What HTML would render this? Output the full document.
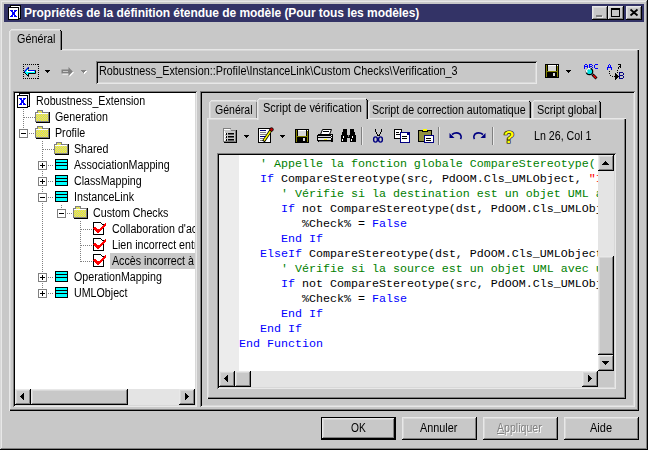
<!DOCTYPE html>
<html><head><meta charset="utf-8"><style>
*{margin:0;padding:0;box-sizing:border-box}
html,body{width:648px;height:450px;overflow:hidden;background:#c8c8c8}
body{position:relative;font-family:"Liberation Sans",sans-serif;font-size:11px;color:#000}
.a{position:absolute}
.t{position:absolute;white-space:pre;line-height:13px;letter-spacing:-0.3px}
.raised{background:#c8c8c8;box-shadow:inset -1px -1px #000,inset 1px 1px #e8e8e8,inset -2px -2px #808080,inset 2px 2px #d8d8d8}
.sunken{box-shadow:inset 1px 1px #808080,inset -1px -1px #e8e8e8,inset 2px 2px #000,inset -2px -2px #d8d8d8}
.dith{background-color:#e4e4e4}
.code{position:absolute;font-family:"Liberation Mono",monospace;font-size:11.67px;line-height:15px;white-space:pre;color:#000}
.k{color:#0000ff}.c{color:#008000}.s{color:#ff0000}
svg{position:absolute;left:0;top:0}
</style></head><body>
<div class="a " style="left:0px;top:0px;width:648px;height:450px;box-shadow:inset -1px -1px #000,inset 1px 1px #d8d8d8,inset -2px -2px #808080,inset 2px 2px #e8e8e8"></div>
<div class="a " style="left:4px;top:4px;width:640px;height:18px;background:#333366"></div>
<div class="t" style="left:24px;top:7px;color:#fff;font-weight:bold;font-size:12px;letter-spacing:-0.05px">Propriétés de la définition étendue de modèle (Pour tous les modèles)</div>
<div class="a raised" style="left:592px;top:6px;width:16px;height:14px;"></div>
<div class="a raised" style="left:608px;top:6px;width:16px;height:14px;"></div>
<div class="a raised" style="left:626px;top:6px;width:16px;height:14px;"></div>
<div class="a " style="left:9px;top:49px;width:630px;height:362px;box-shadow:inset 1px 1px #e8e8e8,inset -1px -1px #000,inset -2px -2px #808080,inset 2px 2px #d8d8d8"></div>
<div class="a " style="left:10px;top:30px;width:51px;height:21px;background:#c8c8c8"></div>
<div class="a " style="left:11px;top:29px;width:49px;height:1px;background:#e8e8e8"></div>
<div class="a " style="left:11px;top:30px;width:49px;height:1px;background:#d8d8d8"></div>
<div class="a " style="left:10px;top:30px;width:1px;height:1px;background:#e8e8e8"></div>
<div class="a " style="left:9px;top:31px;width:1px;height:20px;background:#e8e8e8"></div>
<div class="a " style="left:10px;top:31px;width:1px;height:20px;background:#d8d8d8"></div>
<div class="a " style="left:61px;top:31px;width:1px;height:19px;background:#000"></div>
<div class="a " style="left:60px;top:31px;width:1px;height:19px;background:#808080"></div>
<div class="a " style="left:60px;top:30px;width:1px;height:1px;background:#000"></div>
<div class="t" style="left:17px;top:33px;font-size:12px;letter-spacing:0;transform:scaleX(0.9);transform-origin:0 0;">Général</div>
<div class="a sunken" style="left:96px;top:61px;width:441px;height:23px;"></div>
<div class="t" style="left:99px;top:65px;font-size:12px;letter-spacing:0;transform:scaleX(0.902);transform-origin:0 0;">Robustness_Extension::Profile\InstanceLink\Custom Checks\Verification_3</div>
<div class="a sunken" style="left:13px;top:91px;width:184px;height:316px;background:#fff"></div>
<div class="a " style="left:110px;top:253px;width:85px;height:16px;background:#c8c8c8"></div>
<div class="a" style="left:15px;top:93px;width:180px;height:296px;overflow:hidden">
<div class="t" style="left:21px;top:2px;font-size:12px;letter-spacing:0;transform:scaleX(0.89);transform-origin:0 0;">Robustness_Extension</div>
<div class="t" style="left:40px;top:18px;font-size:12px;letter-spacing:0;transform:scaleX(0.89);transform-origin:0 0;">Generation</div>
<div class="t" style="left:40px;top:34px;font-size:12px;letter-spacing:0;transform:scaleX(0.89);transform-origin:0 0;">Profile</div>
<div class="t" style="left:59px;top:50px;font-size:12px;letter-spacing:0;transform:scaleX(0.89);transform-origin:0 0;">Shared</div>
<div class="t" style="left:59px;top:66px;font-size:12px;letter-spacing:0;transform:scaleX(0.89);transform-origin:0 0;">AssociationMapping</div>
<div class="t" style="left:59px;top:82px;font-size:12px;letter-spacing:0;transform:scaleX(0.89);transform-origin:0 0;">ClassMapping</div>
<div class="t" style="left:59px;top:98px;font-size:12px;letter-spacing:0;transform:scaleX(0.89);transform-origin:0 0;">InstanceLink</div>
<div class="t" style="left:78px;top:114px;font-size:12px;letter-spacing:0;transform:scaleX(0.89);transform-origin:0 0;">Custom Checks</div>
<div class="t" style="left:97px;top:130px;font-size:12px;letter-spacing:0;transform:scaleX(0.89);transform-origin:0 0;">Collaboration d'acteur</div>
<div class="t" style="left:97px;top:146px;font-size:12px;letter-spacing:0;transform:scaleX(0.89);transform-origin:0 0;">Lien incorrect entre</div>
<div class="t" style="left:97px;top:162px;font-size:12px;letter-spacing:0;transform:scaleX(0.89);transform-origin:0 0;">Accès incorrect à</div>
<div class="t" style="left:59px;top:178px;font-size:12px;letter-spacing:0;transform:scaleX(0.89);transform-origin:0 0;">OperationMapping</div>
<div class="t" style="left:59px;top:194px;font-size:12px;letter-spacing:0;transform:scaleX(0.89);transform-origin:0 0;">UMLObject</div>
</div>
<div class="a dith" style="left:15px;top:389px;width:180px;height:16px;"></div>
<div class="a raised" style="left:15px;top:389px;width:16px;height:16px;"></div>
<div class="a raised" style="left:31px;top:389px;width:97px;height:16px;"></div>
<div class="a raised" style="left:179px;top:389px;width:16px;height:16px;"></div>
<div class="a sunken" style="left:200px;top:91px;width:435px;height:316px;"></div>
<div class="a " style="left:207px;top:118px;width:419px;height:281px;box-shadow:inset 1px 1px #e8e8e8,inset -1px -1px #000,inset -2px -2px #808080,inset 2px 2px #d8d8d8"></div>
<div class="a " style="left:210px;top:101px;width:47px;height:17px;background:#c8c8c8"></div>
<div class="a " style="left:211px;top:100px;width:45px;height:1px;background:#e8e8e8"></div>
<div class="a " style="left:211px;top:101px;width:45px;height:1px;background:#d8d8d8"></div>
<div class="a " style="left:210px;top:101px;width:1px;height:1px;background:#e8e8e8"></div>
<div class="a " style="left:209px;top:102px;width:1px;height:16px;background:#e8e8e8"></div>
<div class="a " style="left:210px;top:102px;width:1px;height:16px;background:#d8d8d8"></div>
<div class="a " style="left:256px;top:102px;width:1px;height:16px;background:#808080"></div>
<div class="t" style="left:215px;top:104px;font-size:12px;letter-spacing:0;transform:scaleX(0.878);transform-origin:0 0;">Général</div>
<div class="a " style="left:369px;top:101px;width:161px;height:17px;background:#c8c8c8"></div>
<div class="a " style="left:370px;top:100px;width:159px;height:1px;background:#e8e8e8"></div>
<div class="a " style="left:370px;top:101px;width:159px;height:1px;background:#d8d8d8"></div>
<div class="a " style="left:369px;top:101px;width:1px;height:1px;background:#e8e8e8"></div>
<div class="a " style="left:368px;top:102px;width:1px;height:16px;background:#e8e8e8"></div>
<div class="a " style="left:369px;top:102px;width:1px;height:16px;background:#d8d8d8"></div>
<div class="a " style="left:530px;top:102px;width:1px;height:16px;background:#000"></div>
<div class="a " style="left:529px;top:102px;width:1px;height:16px;background:#808080"></div>
<div class="a " style="left:529px;top:101px;width:1px;height:1px;background:#000"></div>
<div class="t" style="left:372px;top:104px;font-size:12px;letter-spacing:0;transform:scaleX(0.889);transform-origin:0 0;">Script de correction automatique</div>
<div class="a " style="left:533px;top:101px;width:67px;height:17px;background:#c8c8c8"></div>
<div class="a " style="left:534px;top:100px;width:65px;height:1px;background:#e8e8e8"></div>
<div class="a " style="left:534px;top:101px;width:65px;height:1px;background:#d8d8d8"></div>
<div class="a " style="left:533px;top:101px;width:1px;height:1px;background:#e8e8e8"></div>
<div class="a " style="left:532px;top:102px;width:1px;height:16px;background:#e8e8e8"></div>
<div class="a " style="left:533px;top:102px;width:1px;height:16px;background:#d8d8d8"></div>
<div class="a " style="left:600px;top:102px;width:1px;height:16px;background:#000"></div>
<div class="a " style="left:599px;top:102px;width:1px;height:16px;background:#808080"></div>
<div class="a " style="left:599px;top:101px;width:1px;height:1px;background:#000"></div>
<div class="t" style="left:537px;top:104px;font-size:12px;letter-spacing:0;transform:scaleX(0.906);transform-origin:0 0;">Script global</div>
<div class="a " style="left:258px;top:99px;width:109px;height:21px;background:#c8c8c8"></div>
<div class="a " style="left:259px;top:98px;width:107px;height:1px;background:#e8e8e8"></div>
<div class="a " style="left:259px;top:99px;width:107px;height:1px;background:#d8d8d8"></div>
<div class="a " style="left:258px;top:99px;width:1px;height:1px;background:#e8e8e8"></div>
<div class="a " style="left:257px;top:100px;width:1px;height:20px;background:#e8e8e8"></div>
<div class="a " style="left:258px;top:100px;width:1px;height:20px;background:#d8d8d8"></div>
<div class="a " style="left:367px;top:100px;width:1px;height:19px;background:#000"></div>
<div class="a " style="left:366px;top:100px;width:1px;height:19px;background:#808080"></div>
<div class="a " style="left:366px;top:99px;width:1px;height:1px;background:#000"></div>
<div class="t" style="left:263px;top:102px;font-size:12px;letter-spacing:0;transform:scaleX(0.915);transform-origin:0 0;">Script de vérification</div>
<div class="t" style="left:534px;top:130px;font-size:12px;letter-spacing:0;transform:scaleX(0.889);transform-origin:0 0;">Ln 26, Col 1</div>
<div class="a sunken" style="left:217px;top:153px;width:399px;height:236px;background:#fff"></div>
<div class="a " style="left:219px;top:155px;width:20px;height:216px;background:#ececec"></div>
<div class="a" style="left:219px;top:155px;width:379px;height:216px;overflow:hidden">
<div class="code" style="left:20px;top:2px"><span class="c">   ' Appelle la fonction globale CompareStereotype(</span>
   <span class="k">If</span> CompareStereotype(src, PdOOM.Cls_UMLObject, <span class="s">"Interface"</span>
<span class="c">      ' Vérifie si la destination est un objet UML avec</span>
      <span class="k">If</span> not CompareStereotype(dst, PdOOM.Cls_UMLObject
         %Check% = <span class="k">False</span>
      <span class="k">End If</span>
   <span class="k">ElseIf</span> CompareStereotype(dst, PdOOM.Cls_UMLObject,
<span class="c">      ' Vérifie si la source est un objet UML avec un</span>
      <span class="k">If</span> not CompareStereotype(src, PdOOM.Cls_UMLObject
         %Check% = <span class="k">False</span>
      <span class="k">End If</span>
   <span class="k">End If</span>
<span class="k">End Function</span></div>
</div>
<div class="a dith" style="left:598px;top:155px;width:16px;height:216px;"></div>
<div class="a raised" style="left:598px;top:155px;width:16px;height:16px;"></div>
<div class="a raised" style="left:598px;top:256px;width:16px;height:99px;"></div>
<div class="a raised" style="left:598px;top:355px;width:16px;height:16px;"></div>
<div class="a dith" style="left:219px;top:371px;width:379px;height:16px;"></div>
<div class="a raised" style="left:219px;top:371px;width:16px;height:16px;"></div>
<div class="a raised" style="left:235px;top:371px;width:16px;height:16px;"></div>
<div class="a raised" style="left:582px;top:371px;width:16px;height:16px;"></div>
<div class="a " style="left:598px;top:371px;width:16px;height:16px;background:#c8c8c8"></div>
<div class="a " style="left:321px;top:417px;width:75px;height:23px;background:#000"></div>
<div class="a raised" style="left:322px;top:418px;width:73px;height:21px;"></div>
<div class="t" style="left:351px;top:422px;font-size:12px;letter-spacing:0;transform:scaleX(0.85);transform-origin:0 0;">OK</div>
<div class="a raised" style="left:402px;top:417px;width:75px;height:23px;"></div>
<div class="t" style="left:420px;top:422px;font-size:12px;letter-spacing:0;transform:scaleX(0.902);transform-origin:0 0;">Annuler</div>
<div class="a raised" style="left:483px;top:417px;width:75px;height:23px;"></div>
<div class="t" style="left:497px;top:422px;font-size:12px;letter-spacing:0;transform:scaleX(0.882);transform-origin:0 0;color:#808080;text-shadow:1px 1px #fff"><u>A</u>ppliquer</div>
<div class="a raised" style="left:564px;top:417px;width:75px;height:23px;"></div>
<div class="t" style="left:590px;top:422px;font-size:12px;letter-spacing:0;transform:scaleX(0.917);transform-origin:0 0;">Aide</div>
<svg width="648" height="450" shape-rendering="crispEdges"><defs><pattern id="chk" width="2" height="2" patternUnits="userSpaceOnUse"><rect width="2" height="2" fill="#ffff00"/><rect width="1" height="1" fill="#c0c0c0"/><rect x="1" y="1" width="1" height="1" fill="#c0c0c0"/></pattern></defs><rect x="23" y="109" width="1" height="1" fill="#808080"/><rect x="23" y="111" width="1" height="1" fill="#808080"/><rect x="23" y="113" width="1" height="1" fill="#808080"/><rect x="23" y="115" width="1" height="1" fill="#808080"/><rect x="23" y="117" width="1" height="1" fill="#808080"/><rect x="23" y="119" width="1" height="1" fill="#808080"/><rect x="23" y="121" width="1" height="1" fill="#808080"/><rect x="23" y="123" width="1" height="1" fill="#808080"/><rect x="23" y="125" width="1" height="1" fill="#808080"/><rect x="23" y="127" width="1" height="1" fill="#808080"/><rect x="23" y="129" width="1" height="1" fill="#808080"/><rect x="23" y="131" width="1" height="1" fill="#808080"/><rect x="23" y="133" width="1" height="1" fill="#808080"/><rect x="42" y="141" width="1" height="1" fill="#808080"/><rect x="42" y="143" width="1" height="1" fill="#808080"/><rect x="42" y="145" width="1" height="1" fill="#808080"/><rect x="42" y="147" width="1" height="1" fill="#808080"/><rect x="42" y="149" width="1" height="1" fill="#808080"/><rect x="42" y="151" width="1" height="1" fill="#808080"/><rect x="42" y="153" width="1" height="1" fill="#808080"/><rect x="42" y="155" width="1" height="1" fill="#808080"/><rect x="42" y="157" width="1" height="1" fill="#808080"/><rect x="42" y="159" width="1" height="1" fill="#808080"/><rect x="42" y="161" width="1" height="1" fill="#808080"/><rect x="42" y="163" width="1" height="1" fill="#808080"/><rect x="42" y="165" width="1" height="1" fill="#808080"/><rect x="42" y="167" width="1" height="1" fill="#808080"/><rect x="42" y="169" width="1" height="1" fill="#808080"/><rect x="42" y="171" width="1" height="1" fill="#808080"/><rect x="42" y="173" width="1" height="1" fill="#808080"/><rect x="42" y="175" width="1" height="1" fill="#808080"/><rect x="42" y="177" width="1" height="1" fill="#808080"/><rect x="42" y="179" width="1" height="1" fill="#808080"/><rect x="42" y="181" width="1" height="1" fill="#808080"/><rect x="42" y="183" width="1" height="1" fill="#808080"/><rect x="42" y="185" width="1" height="1" fill="#808080"/><rect x="42" y="187" width="1" height="1" fill="#808080"/><rect x="42" y="189" width="1" height="1" fill="#808080"/><rect x="42" y="191" width="1" height="1" fill="#808080"/><rect x="42" y="193" width="1" height="1" fill="#808080"/><rect x="42" y="195" width="1" height="1" fill="#808080"/><rect x="42" y="197" width="1" height="1" fill="#808080"/><rect x="42" y="199" width="1" height="1" fill="#808080"/><rect x="42" y="201" width="1" height="1" fill="#808080"/><rect x="42" y="203" width="1" height="1" fill="#808080"/><rect x="42" y="205" width="1" height="1" fill="#808080"/><rect x="42" y="207" width="1" height="1" fill="#808080"/><rect x="42" y="209" width="1" height="1" fill="#808080"/><rect x="42" y="211" width="1" height="1" fill="#808080"/><rect x="42" y="213" width="1" height="1" fill="#808080"/><rect x="42" y="215" width="1" height="1" fill="#808080"/><rect x="42" y="217" width="1" height="1" fill="#808080"/><rect x="42" y="219" width="1" height="1" fill="#808080"/><rect x="42" y="221" width="1" height="1" fill="#808080"/><rect x="42" y="223" width="1" height="1" fill="#808080"/><rect x="42" y="225" width="1" height="1" fill="#808080"/><rect x="42" y="227" width="1" height="1" fill="#808080"/><rect x="42" y="229" width="1" height="1" fill="#808080"/><rect x="42" y="231" width="1" height="1" fill="#808080"/><rect x="42" y="233" width="1" height="1" fill="#808080"/><rect x="42" y="235" width="1" height="1" fill="#808080"/><rect x="42" y="237" width="1" height="1" fill="#808080"/><rect x="42" y="239" width="1" height="1" fill="#808080"/><rect x="42" y="241" width="1" height="1" fill="#808080"/><rect x="42" y="243" width="1" height="1" fill="#808080"/><rect x="42" y="245" width="1" height="1" fill="#808080"/><rect x="42" y="247" width="1" height="1" fill="#808080"/><rect x="42" y="249" width="1" height="1" fill="#808080"/><rect x="42" y="251" width="1" height="1" fill="#808080"/><rect x="42" y="253" width="1" height="1" fill="#808080"/><rect x="42" y="255" width="1" height="1" fill="#808080"/><rect x="42" y="257" width="1" height="1" fill="#808080"/><rect x="42" y="259" width="1" height="1" fill="#808080"/><rect x="42" y="261" width="1" height="1" fill="#808080"/><rect x="42" y="263" width="1" height="1" fill="#808080"/><rect x="42" y="265" width="1" height="1" fill="#808080"/><rect x="42" y="267" width="1" height="1" fill="#808080"/><rect x="42" y="269" width="1" height="1" fill="#808080"/><rect x="42" y="271" width="1" height="1" fill="#808080"/><rect x="42" y="273" width="1" height="1" fill="#808080"/><rect x="42" y="275" width="1" height="1" fill="#808080"/><rect x="42" y="277" width="1" height="1" fill="#808080"/><rect x="42" y="279" width="1" height="1" fill="#808080"/><rect x="42" y="281" width="1" height="1" fill="#808080"/><rect x="42" y="283" width="1" height="1" fill="#808080"/><rect x="42" y="285" width="1" height="1" fill="#808080"/><rect x="42" y="287" width="1" height="1" fill="#808080"/><rect x="42" y="289" width="1" height="1" fill="#808080"/><rect x="42" y="291" width="1" height="1" fill="#808080"/><rect x="42" y="293" width="1" height="1" fill="#808080"/><rect x="61" y="205" width="1" height="1" fill="#808080"/><rect x="61" y="207" width="1" height="1" fill="#808080"/><rect x="61" y="209" width="1" height="1" fill="#808080"/><rect x="61" y="211" width="1" height="1" fill="#808080"/><rect x="61" y="213" width="1" height="1" fill="#808080"/><rect x="80" y="221" width="1" height="1" fill="#808080"/><rect x="80" y="223" width="1" height="1" fill="#808080"/><rect x="80" y="225" width="1" height="1" fill="#808080"/><rect x="80" y="227" width="1" height="1" fill="#808080"/><rect x="80" y="229" width="1" height="1" fill="#808080"/><rect x="80" y="231" width="1" height="1" fill="#808080"/><rect x="80" y="233" width="1" height="1" fill="#808080"/><rect x="80" y="235" width="1" height="1" fill="#808080"/><rect x="80" y="237" width="1" height="1" fill="#808080"/><rect x="80" y="239" width="1" height="1" fill="#808080"/><rect x="80" y="241" width="1" height="1" fill="#808080"/><rect x="80" y="243" width="1" height="1" fill="#808080"/><rect x="80" y="245" width="1" height="1" fill="#808080"/><rect x="80" y="247" width="1" height="1" fill="#808080"/><rect x="80" y="249" width="1" height="1" fill="#808080"/><rect x="80" y="251" width="1" height="1" fill="#808080"/><rect x="80" y="253" width="1" height="1" fill="#808080"/><rect x="80" y="255" width="1" height="1" fill="#808080"/><rect x="80" y="257" width="1" height="1" fill="#808080"/><rect x="80" y="259" width="1" height="1" fill="#808080"/><rect x="80" y="261" width="1" height="1" fill="#808080"/><rect x="24" y="117" width="1" height="1" fill="#808080"/><rect x="26" y="117" width="1" height="1" fill="#808080"/><rect x="28" y="117" width="1" height="1" fill="#808080"/><rect x="30" y="117" width="1" height="1" fill="#808080"/><rect x="32" y="117" width="1" height="1" fill="#808080"/><rect x="34" y="117" width="1" height="1" fill="#808080"/><rect x="29" y="133" width="1" height="1" fill="#808080"/><rect x="31" y="133" width="1" height="1" fill="#808080"/><rect x="33" y="133" width="1" height="1" fill="#808080"/><rect x="43" y="149" width="1" height="1" fill="#808080"/><rect x="45" y="149" width="1" height="1" fill="#808080"/><rect x="47" y="149" width="1" height="1" fill="#808080"/><rect x="49" y="149" width="1" height="1" fill="#808080"/><rect x="51" y="149" width="1" height="1" fill="#808080"/><rect x="53" y="149" width="1" height="1" fill="#808080"/><rect x="48" y="165" width="1" height="1" fill="#808080"/><rect x="50" y="165" width="1" height="1" fill="#808080"/><rect x="52" y="165" width="1" height="1" fill="#808080"/><rect x="48" y="181" width="1" height="1" fill="#808080"/><rect x="50" y="181" width="1" height="1" fill="#808080"/><rect x="52" y="181" width="1" height="1" fill="#808080"/><rect x="48" y="197" width="1" height="1" fill="#808080"/><rect x="50" y="197" width="1" height="1" fill="#808080"/><rect x="52" y="197" width="1" height="1" fill="#808080"/><rect x="48" y="277" width="1" height="1" fill="#808080"/><rect x="50" y="277" width="1" height="1" fill="#808080"/><rect x="52" y="277" width="1" height="1" fill="#808080"/><rect x="48" y="293" width="1" height="1" fill="#808080"/><rect x="50" y="293" width="1" height="1" fill="#808080"/><rect x="52" y="293" width="1" height="1" fill="#808080"/><rect x="67" y="213" width="1" height="1" fill="#808080"/><rect x="69" y="213" width="1" height="1" fill="#808080"/><rect x="71" y="213" width="1" height="1" fill="#808080"/><rect x="81" y="229" width="1" height="1" fill="#808080"/><rect x="83" y="229" width="1" height="1" fill="#808080"/><rect x="85" y="229" width="1" height="1" fill="#808080"/><rect x="87" y="229" width="1" height="1" fill="#808080"/><rect x="89" y="229" width="1" height="1" fill="#808080"/><rect x="91" y="229" width="1" height="1" fill="#808080"/><rect x="81" y="245" width="1" height="1" fill="#808080"/><rect x="83" y="245" width="1" height="1" fill="#808080"/><rect x="85" y="245" width="1" height="1" fill="#808080"/><rect x="87" y="245" width="1" height="1" fill="#808080"/><rect x="89" y="245" width="1" height="1" fill="#808080"/><rect x="91" y="245" width="1" height="1" fill="#808080"/><rect x="81" y="261" width="1" height="1" fill="#808080"/><rect x="83" y="261" width="1" height="1" fill="#808080"/><rect x="85" y="261" width="1" height="1" fill="#808080"/><rect x="87" y="261" width="1" height="1" fill="#808080"/><rect x="89" y="261" width="1" height="1" fill="#808080"/><rect x="91" y="261" width="1" height="1" fill="#808080"/><rect x="19" y="129" width="9" height="9" fill="#808080"/><rect x="20" y="130" width="7" height="7" fill="#fff"/><rect x="21" y="133" width="5" height="1" fill="#000"/><rect x="38" y="161" width="9" height="9" fill="#808080"/><rect x="39" y="162" width="7" height="7" fill="#fff"/><rect x="40" y="165" width="5" height="1" fill="#000"/><rect x="42" y="163" width="1" height="5" fill="#000"/><rect x="38" y="177" width="9" height="9" fill="#808080"/><rect x="39" y="178" width="7" height="7" fill="#fff"/><rect x="40" y="181" width="5" height="1" fill="#000"/><rect x="42" y="179" width="1" height="5" fill="#000"/><rect x="38" y="193" width="9" height="9" fill="#808080"/><rect x="39" y="194" width="7" height="7" fill="#fff"/><rect x="40" y="197" width="5" height="1" fill="#000"/><rect x="38" y="273" width="9" height="9" fill="#808080"/><rect x="39" y="274" width="7" height="7" fill="#fff"/><rect x="40" y="277" width="5" height="1" fill="#000"/><rect x="42" y="275" width="1" height="5" fill="#000"/><rect x="38" y="289" width="9" height="9" fill="#808080"/><rect x="39" y="290" width="7" height="7" fill="#fff"/><rect x="40" y="293" width="5" height="1" fill="#000"/><rect x="42" y="291" width="1" height="5" fill="#000"/><rect x="57" y="209" width="9" height="9" fill="#808080"/><rect x="58" y="210" width="7" height="7" fill="#fff"/><rect x="59" y="213" width="5" height="1" fill="#000"/><rect x="19" y="93" width="11" height="14" fill="#000"/><rect x="20" y="94" width="9" height="12" fill="#e8e8e8"/><rect x="20" y="94" width="8" height="1" fill="#fff"/><rect x="17" y="95" width="11" height="13" fill="#000"/><rect x="18" y="96" width="9" height="11" fill="#fff"/><rect x="19" y="98" width="1" height="1" fill="#00f"/><rect x="20" y="98" width="1" height="1" fill="#00f"/><rect x="21" y="98" width="1" height="1" fill="#00f"/><rect x="23" y="98" width="1" height="1" fill="#00f"/><rect x="24" y="98" width="1" height="1" fill="#00f"/><rect x="25" y="98" width="1" height="1" fill="#00f"/><rect x="20" y="99" width="1" height="1" fill="#00f"/><rect x="21" y="99" width="1" height="1" fill="#00f"/><rect x="23" y="99" width="1" height="1" fill="#00f"/><rect x="24" y="99" width="1" height="1" fill="#00f"/><rect x="21" y="100" width="1" height="1" fill="#00f"/><rect x="22" y="100" width="1" height="1" fill="#00f"/><rect x="23" y="100" width="1" height="1" fill="#00f"/><rect x="21" y="101" width="1" height="1" fill="#00f"/><rect x="22" y="101" width="1" height="1" fill="#00f"/><rect x="23" y="101" width="1" height="1" fill="#00f"/><rect x="21" y="102" width="1" height="1" fill="#00f"/><rect x="22" y="102" width="1" height="1" fill="#00f"/><rect x="23" y="102" width="1" height="1" fill="#00f"/><rect x="20" y="103" width="1" height="1" fill="#00f"/><rect x="21" y="103" width="1" height="1" fill="#00f"/><rect x="23" y="103" width="1" height="1" fill="#00f"/><rect x="24" y="103" width="1" height="1" fill="#00f"/><rect x="19" y="104" width="1" height="1" fill="#00f"/><rect x="20" y="104" width="1" height="1" fill="#00f"/><rect x="21" y="104" width="1" height="1" fill="#00f"/><rect x="23" y="104" width="1" height="1" fill="#00f"/><rect x="24" y="104" width="1" height="1" fill="#00f"/><rect x="25" y="104" width="1" height="1" fill="#00f"/><rect x="36" y="112" width="14" height="11" fill="#000"/><rect x="35" y="112" width="14" height="10" fill="#808080"/><rect x="37" y="110" width="6" height="2" fill="#808080"/><rect x="36" y="113" width="12" height="8" fill="url(#chk)"/><rect x="38" y="111" width="4" height="2" fill="url(#chk)"/><rect x="36" y="113" width="12" height="1" fill="#fff"/><rect x="36" y="128" width="14" height="11" fill="#000"/><rect x="35" y="128" width="14" height="10" fill="#808080"/><rect x="37" y="126" width="6" height="2" fill="#808080"/><rect x="36" y="129" width="12" height="8" fill="url(#chk)"/><rect x="38" y="127" width="4" height="2" fill="url(#chk)"/><rect x="36" y="129" width="12" height="1" fill="#fff"/><rect x="55" y="144" width="14" height="11" fill="#000"/><rect x="54" y="144" width="14" height="10" fill="#808080"/><rect x="56" y="142" width="6" height="2" fill="#808080"/><rect x="55" y="145" width="12" height="8" fill="url(#chk)"/><rect x="57" y="143" width="4" height="2" fill="url(#chk)"/><rect x="55" y="145" width="12" height="1" fill="#fff"/><rect x="74" y="208" width="14" height="11" fill="#000"/><rect x="73" y="208" width="14" height="10" fill="#808080"/><rect x="75" y="206" width="6" height="2" fill="#808080"/><rect x="74" y="209" width="12" height="8" fill="url(#chk)"/><rect x="76" y="207" width="4" height="2" fill="url(#chk)"/><rect x="74" y="209" width="12" height="1" fill="#fff"/><rect x="55" y="159" width="13" height="11" fill="#000"/><rect x="56" y="160" width="11" height="2" fill="#00ffff"/><rect x="56" y="163" width="11" height="2" fill="#00ffff"/><rect x="56" y="166" width="11" height="3" fill="#00ffff"/><rect x="55" y="175" width="13" height="11" fill="#000"/><rect x="56" y="176" width="11" height="2" fill="#00ffff"/><rect x="56" y="179" width="11" height="2" fill="#00ffff"/><rect x="56" y="182" width="11" height="3" fill="#00ffff"/><rect x="55" y="191" width="13" height="11" fill="#000"/><rect x="56" y="192" width="11" height="2" fill="#00ffff"/><rect x="56" y="195" width="11" height="2" fill="#00ffff"/><rect x="56" y="198" width="11" height="3" fill="#00ffff"/><rect x="55" y="271" width="13" height="11" fill="#000"/><rect x="56" y="272" width="11" height="2" fill="#00ffff"/><rect x="56" y="275" width="11" height="2" fill="#00ffff"/><rect x="56" y="278" width="11" height="3" fill="#00ffff"/><rect x="55" y="287" width="13" height="11" fill="#000"/><rect x="56" y="288" width="11" height="2" fill="#00ffff"/><rect x="56" y="291" width="11" height="2" fill="#00ffff"/><rect x="56" y="294" width="11" height="3" fill="#00ffff"/><rect x="93" y="222" width="11" height="13" fill="#000"/><rect x="94" y="223" width="9" height="11" fill="#fff"/><rect x="100" y="222" width="4" height="3" fill="#fff"/><rect x="100" y="222" width="1" height="1" fill="#000"/><rect x="101" y="223" width="1" height="1" fill="#000"/><rect x="102" y="224" width="2" height="1" fill="#000"/><path d="M94 227.5L98 231.5L106 224" stroke="#f00" stroke-width="2.2" fill="none"/><rect x="93" y="238" width="11" height="13" fill="#000"/><rect x="94" y="239" width="9" height="11" fill="#fff"/><rect x="100" y="238" width="4" height="3" fill="#fff"/><rect x="100" y="238" width="1" height="1" fill="#000"/><rect x="101" y="239" width="1" height="1" fill="#000"/><rect x="102" y="240" width="2" height="1" fill="#000"/><path d="M94 243.5L98 247.5L106 240" stroke="#f00" stroke-width="2.2" fill="none"/><rect x="93" y="254" width="11" height="13" fill="#000"/><rect x="94" y="255" width="9" height="11" fill="#fff"/><rect x="100" y="254" width="4" height="3" fill="#fff"/><rect x="100" y="254" width="1" height="1" fill="#000"/><rect x="101" y="255" width="1" height="1" fill="#000"/><rect x="102" y="256" width="2" height="1" fill="#000"/><path d="M94 259.5L98 263.5L106 256" stroke="#f00" stroke-width="2.2" fill="none"/><rect x="10" y="5" width="11" height="14" fill="#000"/><rect x="11" y="6" width="9" height="12" fill="#e8e8e8"/><rect x="11" y="6" width="8" height="1" fill="#fff"/><rect x="8" y="7" width="11" height="13" fill="#000"/><rect x="9" y="8" width="9" height="11" fill="#fff"/><rect x="10" y="10" width="1" height="1" fill="#00f"/><rect x="11" y="10" width="1" height="1" fill="#00f"/><rect x="12" y="10" width="1" height="1" fill="#00f"/><rect x="14" y="10" width="1" height="1" fill="#00f"/><rect x="15" y="10" width="1" height="1" fill="#00f"/><rect x="16" y="10" width="1" height="1" fill="#00f"/><rect x="11" y="11" width="1" height="1" fill="#00f"/><rect x="12" y="11" width="1" height="1" fill="#00f"/><rect x="14" y="11" width="1" height="1" fill="#00f"/><rect x="15" y="11" width="1" height="1" fill="#00f"/><rect x="12" y="12" width="1" height="1" fill="#00f"/><rect x="13" y="12" width="1" height="1" fill="#00f"/><rect x="14" y="12" width="1" height="1" fill="#00f"/><rect x="12" y="13" width="1" height="1" fill="#00f"/><rect x="13" y="13" width="1" height="1" fill="#00f"/><rect x="14" y="13" width="1" height="1" fill="#00f"/><rect x="12" y="14" width="1" height="1" fill="#00f"/><rect x="13" y="14" width="1" height="1" fill="#00f"/><rect x="14" y="14" width="1" height="1" fill="#00f"/><rect x="11" y="15" width="1" height="1" fill="#00f"/><rect x="12" y="15" width="1" height="1" fill="#00f"/><rect x="14" y="15" width="1" height="1" fill="#00f"/><rect x="15" y="15" width="1" height="1" fill="#00f"/><rect x="10" y="16" width="1" height="1" fill="#00f"/><rect x="11" y="16" width="1" height="1" fill="#00f"/><rect x="12" y="16" width="1" height="1" fill="#00f"/><rect x="14" y="16" width="1" height="1" fill="#00f"/><rect x="15" y="16" width="1" height="1" fill="#00f"/><rect x="16" y="16" width="1" height="1" fill="#00f"/><rect x="20" y="396" width="1" height="1" fill="#000"/><rect x="21" y="395" width="1" height="3" fill="#000"/><rect x="22" y="394" width="1" height="5" fill="#000"/><rect x="23" y="393" width="1" height="7" fill="#000"/><rect x="188" y="396" width="1" height="1" fill="#000"/><rect x="187" y="395" width="1" height="3" fill="#000"/><rect x="186" y="394" width="1" height="5" fill="#000"/><rect x="185" y="393" width="1" height="7" fill="#000"/><rect x="605" y="161" width="1" height="1" fill="#000"/><rect x="604" y="162" width="3" height="1" fill="#000"/><rect x="603" y="163" width="5" height="1" fill="#000"/><rect x="602" y="164" width="7" height="1" fill="#000"/><rect x="605" y="364" width="1" height="1" fill="#000"/><rect x="604" y="363" width="3" height="1" fill="#000"/><rect x="603" y="362" width="5" height="1" fill="#000"/><rect x="602" y="361" width="7" height="1" fill="#000"/><rect x="224" y="378" width="1" height="1" fill="#000"/><rect x="225" y="377" width="1" height="3" fill="#000"/><rect x="226" y="376" width="1" height="5" fill="#000"/><rect x="227" y="375" width="1" height="7" fill="#000"/><rect x="591" y="378" width="1" height="1" fill="#000"/><rect x="590" y="377" width="1" height="3" fill="#000"/><rect x="589" y="376" width="1" height="5" fill="#000"/><rect x="588" y="375" width="1" height="7" fill="#000"/><rect x="23" y="64" width="1" height="1" fill="#000"/><rect x="23" y="78" width="1" height="1" fill="#000"/><rect x="25" y="64" width="1" height="1" fill="#000"/><rect x="25" y="78" width="1" height="1" fill="#000"/><rect x="27" y="64" width="1" height="1" fill="#000"/><rect x="27" y="78" width="1" height="1" fill="#000"/><rect x="29" y="64" width="1" height="1" fill="#000"/><rect x="29" y="78" width="1" height="1" fill="#000"/><rect x="31" y="64" width="1" height="1" fill="#000"/><rect x="31" y="78" width="1" height="1" fill="#000"/><rect x="33" y="64" width="1" height="1" fill="#000"/><rect x="33" y="78" width="1" height="1" fill="#000"/><rect x="35" y="64" width="1" height="1" fill="#000"/><rect x="35" y="78" width="1" height="1" fill="#000"/><rect x="37" y="64" width="1" height="1" fill="#000"/><rect x="37" y="78" width="1" height="1" fill="#000"/><rect x="23" y="64" width="1" height="1" fill="#000"/><rect x="38" y="64" width="1" height="1" fill="#000"/><rect x="23" y="66" width="1" height="1" fill="#000"/><rect x="38" y="66" width="1" height="1" fill="#000"/><rect x="23" y="68" width="1" height="1" fill="#000"/><rect x="38" y="68" width="1" height="1" fill="#000"/><rect x="23" y="70" width="1" height="1" fill="#000"/><rect x="38" y="70" width="1" height="1" fill="#000"/><rect x="23" y="72" width="1" height="1" fill="#000"/><rect x="38" y="72" width="1" height="1" fill="#000"/><rect x="23" y="74" width="1" height="1" fill="#000"/><rect x="38" y="74" width="1" height="1" fill="#000"/><rect x="23" y="76" width="1" height="1" fill="#000"/><rect x="38" y="76" width="1" height="1" fill="#000"/><rect x="23" y="78" width="1" height="1" fill="#000"/><rect x="38" y="78" width="1" height="1" fill="#000"/><g shape-rendering="auto"><polygon points="24,72 28.5,67.5 28.5,70.5 35.5,70.5 35.5,73.5 28.5,73.5 28.5,76.5" fill="#00ffff" stroke="#000" stroke-width="1" /></g><rect x="29" y="70" width="6" height="1" fill="#0000ff"/><rect x="27" y="71" width="7" height="1" fill="#fff"/><g shape-rendering="auto"><path d="M24.3 71.6L28.6 67.3" stroke="#0000ff" stroke-width="1.1"/><path d="M26.5 71.5L28.5 69.5" stroke="#fff" stroke-width="1"/></g><rect x="45" y="70" width="5" height="1" fill="#000"/><rect x="46" y="71" width="3" height="1" fill="#000"/><rect x="47" y="72" width="1" height="1" fill="#000"/><g shape-rendering="auto"><polygon points="74,72.5 69.5,68 69.5,70.5 62.5,70.5 62.5,74.5 69.5,74.5 69.5,77" fill="#fff" /><polygon points="73,71.5 68.5,67 68.5,69.5 61.5,69.5 61.5,73.5 68.5,73.5 68.5,76" fill="#808080" /></g><rect x="63" y="71" width="5" height="1" fill="#c8c8c8"/><rect x="82" y="71" width="5" height="1" fill="#fff"/><rect x="83" y="72" width="3" height="1" fill="#fff"/><rect x="84" y="73" width="1" height="1" fill="#fff"/><rect x="81" y="70" width="5" height="1" fill="#808080"/><rect x="82" y="71" width="3" height="1" fill="#808080"/><rect x="83" y="72" width="1" height="1" fill="#808080"/><rect x="545" y="64" width="14" height="14" fill="#000"/><rect x="546" y="65" width="1" height="12" fill="#808000"/><rect x="557" y="65" width="1" height="12" fill="#808000"/><rect x="546" y="71" width="12" height="1" fill="#808000"/><rect x="548" y="65" width="8" height="6" fill="#d8d8d8"/><rect x="548" y="65" width="8" height="1" fill="#fff"/><rect x="553" y="73" width="2" height="3" fill="#d8d8d8"/><rect x="557" y="65" width="1" height="1" fill="#fff"/><rect x="566" y="70" width="5" height="1" fill="#000"/><rect x="567" y="71" width="3" height="1" fill="#000"/><rect x="568" y="72" width="1" height="1" fill="#000"/><rect x="585" y="64" width="1" height="1" fill="#0000ff"/><rect x="586" y="64" width="1" height="1" fill="#0000ff"/><rect x="584" y="65" width="1" height="1" fill="#0000ff"/><rect x="587" y="65" width="1" height="1" fill="#0000ff"/><rect x="584" y="66" width="1" height="1" fill="#0000ff"/><rect x="585" y="66" width="1" height="1" fill="#0000ff"/><rect x="586" y="66" width="1" height="1" fill="#0000ff"/><rect x="587" y="66" width="1" height="1" fill="#0000ff"/><rect x="584" y="67" width="1" height="1" fill="#0000ff"/><rect x="587" y="67" width="1" height="1" fill="#0000ff"/><rect x="584" y="68" width="1" height="1" fill="#0000ff"/><rect x="587" y="68" width="1" height="1" fill="#0000ff"/><rect x="589" y="64" width="1" height="1" fill="#0000ff"/><rect x="590" y="64" width="1" height="1" fill="#0000ff"/><rect x="591" y="64" width="1" height="1" fill="#0000ff"/><rect x="589" y="65" width="1" height="1" fill="#0000ff"/><rect x="592" y="65" width="1" height="1" fill="#0000ff"/><rect x="589" y="66" width="1" height="1" fill="#0000ff"/><rect x="590" y="66" width="1" height="1" fill="#0000ff"/><rect x="591" y="66" width="1" height="1" fill="#0000ff"/><rect x="589" y="67" width="1" height="1" fill="#0000ff"/><rect x="592" y="67" width="1" height="1" fill="#0000ff"/><rect x="589" y="68" width="1" height="1" fill="#0000ff"/><rect x="590" y="68" width="1" height="1" fill="#0000ff"/><rect x="591" y="68" width="1" height="1" fill="#0000ff"/><rect x="595" y="64" width="1" height="1" fill="#0000ff"/><rect x="596" y="64" width="1" height="1" fill="#0000ff"/><rect x="597" y="64" width="1" height="1" fill="#0000ff"/><rect x="594" y="65" width="1" height="1" fill="#0000ff"/><rect x="594" y="66" width="1" height="1" fill="#0000ff"/><rect x="594" y="67" width="1" height="1" fill="#0000ff"/><rect x="595" y="68" width="1" height="1" fill="#0000ff"/><rect x="596" y="68" width="1" height="1" fill="#0000ff"/><rect x="597" y="68" width="1" height="1" fill="#0000ff"/><g shape-rendering="auto"><path d="M592.5 74.5L596.5 78.5" stroke="#000" stroke-width="2.8"/><path d="M593.3 75.3L596 78" stroke="#f00" stroke-width="1.3"/><circle cx="589.5" cy="71.5" r="3.2" fill="#00e0e0" stroke="#000" stroke-width="1.2"/><path d="M587.2 72.5A2.3 2.3 0 0 1 590.5 69.3" stroke="#fff" stroke-width="1.3" fill="none"/></g><rect x="609" y="64" width="1" height="1" fill="#0000ff"/><rect x="608" y="65" width="1" height="1" fill="#0000ff"/><rect x="610" y="65" width="1" height="1" fill="#0000ff"/><rect x="608" y="66" width="1" height="1" fill="#0000ff"/><rect x="610" y="66" width="1" height="1" fill="#0000ff"/><rect x="607" y="67" width="1" height="1" fill="#0000ff"/><rect x="608" y="67" width="1" height="1" fill="#0000ff"/><rect x="609" y="67" width="1" height="1" fill="#0000ff"/><rect x="610" y="67" width="1" height="1" fill="#0000ff"/><rect x="611" y="67" width="1" height="1" fill="#0000ff"/><rect x="607" y="68" width="1" height="1" fill="#0000ff"/><rect x="611" y="68" width="1" height="1" fill="#0000ff"/><rect x="607" y="69" width="1" height="1" fill="#0000ff"/><rect x="611" y="69" width="1" height="1" fill="#0000ff"/><rect x="619" y="72" width="1" height="1" fill="#000080"/><rect x="620" y="72" width="1" height="1" fill="#000080"/><rect x="621" y="72" width="1" height="1" fill="#000080"/><rect x="622" y="72" width="1" height="1" fill="#000080"/><rect x="619" y="73" width="1" height="1" fill="#000080"/><rect x="623" y="73" width="1" height="1" fill="#000080"/><rect x="619" y="74" width="1" height="1" fill="#000080"/><rect x="623" y="74" width="1" height="1" fill="#000080"/><rect x="619" y="75" width="1" height="1" fill="#000080"/><rect x="620" y="75" width="1" height="1" fill="#000080"/><rect x="621" y="75" width="1" height="1" fill="#000080"/><rect x="622" y="75" width="1" height="1" fill="#000080"/><rect x="619" y="76" width="1" height="1" fill="#000080"/><rect x="623" y="76" width="1" height="1" fill="#000080"/><rect x="619" y="77" width="1" height="1" fill="#000080"/><rect x="623" y="77" width="1" height="1" fill="#000080"/><rect x="619" y="78" width="1" height="1" fill="#000080"/><rect x="620" y="78" width="1" height="1" fill="#000080"/><rect x="621" y="78" width="1" height="1" fill="#000080"/><rect x="622" y="78" width="1" height="1" fill="#000080"/><rect x="609" y="71" width="1" height="1" fill="#000"/><rect x="609" y="73" width="1" height="1" fill="#000"/><rect x="610" y="75" width="1" height="1" fill="#000"/><rect x="612" y="76" width="1" height="1" fill="#000"/><rect x="614" y="76" width="1" height="1" fill="#000"/><rect x="617" y="72" width="1" height="1" fill="#000"/><rect x="617" y="70" width="1" height="1" fill="#000"/><rect x="618" y="68" width="1" height="1" fill="#000"/><rect x="615" y="73" width="1" height="1" fill="#000"/><rect x="615" y="74" width="1" height="1" fill="#000"/><rect x="616" y="74" width="1" height="1" fill="#000"/><rect x="615" y="75" width="1" height="1" fill="#000"/><rect x="616" y="75" width="1" height="1" fill="#000"/><rect x="617" y="75" width="1" height="1" fill="#000"/><rect x="615" y="76" width="1" height="1" fill="#000"/><rect x="616" y="76" width="1" height="1" fill="#000"/><rect x="617" y="76" width="1" height="1" fill="#000"/><rect x="618" y="76" width="1" height="1" fill="#000"/><rect x="615" y="77" width="1" height="1" fill="#000"/><rect x="616" y="77" width="1" height="1" fill="#000"/><rect x="617" y="77" width="1" height="1" fill="#000"/><rect x="615" y="78" width="1" height="1" fill="#000"/><rect x="616" y="78" width="1" height="1" fill="#000"/><rect x="615" y="79" width="1" height="1" fill="#000"/><rect x="618" y="64" width="1" height="1" fill="#000"/><rect x="619" y="64" width="1" height="1" fill="#000"/><rect x="620" y="64" width="1" height="1" fill="#000"/><rect x="620" y="65" width="1" height="1" fill="#000"/><rect x="619" y="66" width="1" height="1" fill="#000"/><rect x="620" y="66" width="1" height="1" fill="#000"/><rect x="618" y="67" width="1" height="1" fill="#000"/><rect x="620" y="67" width="1" height="1" fill="#000"/><rect x="223" y="128" width="8" height="1" fill="#808080"/><rect x="223" y="128" width="1" height="14" fill="#808080"/><rect x="231" y="130" width="6" height="1" fill="#808080"/><rect x="224" y="129" width="6" height="1" fill="#fff"/><rect x="224" y="131" width="1" height="10" fill="#fff"/><rect x="236" y="130" width="1" height="13" fill="#000"/><rect x="224" y="142" width="13" height="1" fill="#000"/><rect x="235" y="131" width="1" height="11" fill="#808080"/><rect x="224" y="141" width="12" height="1" fill="#808080"/><rect x="226" y="133" width="1" height="2" fill="#000"/><rect x="225" y="133" width="1" height="1" fill="#fff"/><rect x="228" y="133" width="6" height="1" fill="#000"/><rect x="228" y="134" width="6" height="1" fill="#606060"/><rect x="226" y="136" width="1" height="2" fill="#000"/><rect x="225" y="136" width="1" height="1" fill="#fff"/><rect x="228" y="136" width="6" height="1" fill="#000"/><rect x="228" y="137" width="6" height="1" fill="#606060"/><rect x="226" y="139" width="1" height="2" fill="#000"/><rect x="225" y="139" width="1" height="1" fill="#fff"/><rect x="228" y="139" width="6" height="1" fill="#000"/><rect x="228" y="140" width="6" height="1" fill="#606060"/><rect x="244" y="135" width="5" height="1" fill="#000"/><rect x="245" y="136" width="3" height="1" fill="#000"/><rect x="246" y="137" width="1" height="1" fill="#000"/><rect x="258" y="128" width="13" height="15" fill="#000"/><rect x="259" y="129" width="11" height="13" fill="#fff"/><rect x="260" y="130" width="6" height="1" fill="#000080"/><rect x="260" y="132" width="6" height="1" fill="#808080"/><rect x="260" y="134" width="6" height="1" fill="#808080"/><rect x="260" y="136" width="6" height="1" fill="#000080"/><rect x="260" y="138" width="6" height="1" fill="#808080"/><rect x="260" y="140" width="6" height="1" fill="#808080"/><g shape-rendering="auto"><path d="M263.5 141.5L271 130" stroke="#000" stroke-width="3.2"/><path d="M264 140.5L270.5 131" stroke="#ff0" stroke-width="1.4"/><circle cx="271.5" cy="129.5" r="1.8" fill="#c00000" stroke="#000" stroke-width="0.8"/></g><rect x="280" y="135" width="5" height="1" fill="#000"/><rect x="281" y="136" width="3" height="1" fill="#000"/><rect x="282" y="137" width="1" height="1" fill="#000"/><rect x="295" y="129" width="14" height="14" fill="#000"/><rect x="296" y="130" width="1" height="12" fill="#808000"/><rect x="307" y="130" width="1" height="12" fill="#808000"/><rect x="296" y="136" width="12" height="1" fill="#808000"/><rect x="298" y="130" width="8" height="6" fill="#d8d8d8"/><rect x="298" y="130" width="8" height="1" fill="#fff"/><rect x="303" y="138" width="2" height="3" fill="#d8d8d8"/><rect x="307" y="130" width="1" height="1" fill="#fff"/><g shape-rendering="auto"><polygon points="322.5,129.5 331.5,129.5 329.5,134.5 320.5,134.5" fill="#fff" stroke="#000" stroke-width="1" /></g><rect x="323" y="131" width="6" height="1" fill="#000"/><rect x="318" y="134" width="15" height="8" fill="#000"/><rect x="317" y="135" width="1" height="6" fill="#000"/><rect x="318" y="136" width="13" height="1" fill="#d8d8d8"/><rect x="318" y="138" width="13" height="2" fill="#e8e8e8"/><rect x="324" y="139" width="3" height="1" fill="#ffff00"/><rect x="319" y="141" width="12" height="1" fill="#808080"/><rect x="331" y="135" width="1" height="1" fill="#fff"/><rect x="331" y="137" width="1" height="1" fill="#fff"/><rect x="343" y="129" width="4" height="3" fill="#000"/><rect x="350" y="129" width="4" height="3" fill="#000"/><rect x="342" y="132" width="5" height="3" fill="#000"/><rect x="350" y="132" width="5" height="3" fill="#000"/><rect x="341" y="135" width="15" height="3" fill="#000"/><rect x="341" y="138" width="6" height="4" fill="#000"/><rect x="350" y="138" width="6" height="4" fill="#000"/><rect x="343" y="136" width="1" height="2" fill="#fff"/><rect x="352" y="136" width="1" height="2" fill="#fff"/><rect x="342" y="139" width="1" height="2" fill="#fff"/><rect x="351" y="139" width="1" height="2" fill="#fff"/><rect x="348" y="135" width="1" height="2" fill="#808080"/><rect x="361" y="127" width="1" height="18" fill="#808080"/><rect x="362" y="127" width="1" height="18" fill="#e8e8e8"/><rect x="438" y="127" width="1" height="18" fill="#808080"/><rect x="439" y="127" width="1" height="18" fill="#e8e8e8"/><rect x="492" y="127" width="1" height="18" fill="#808080"/><rect x="493" y="127" width="1" height="18" fill="#e8e8e8"/><rect x="375" y="129" width="1" height="3" fill="#000"/><rect x="376" y="132" width="1" height="2" fill="#000"/><rect x="377" y="134" width="1" height="2" fill="#000"/><rect x="381" y="129" width="1" height="3" fill="#000"/><rect x="380" y="132" width="1" height="2" fill="#000"/><rect x="379" y="134" width="1" height="2" fill="#000"/><rect x="378" y="135" width="1" height="1" fill="#000"/><g shape-rendering="auto"><ellipse cx="375.5" cy="139.5" rx="1.9" ry="2.6" fill="none" stroke="#000080" stroke-width="1.4"/><ellipse cx="380.5" cy="139.5" rx="1.9" ry="2.6" fill="none" stroke="#000080" stroke-width="1.4"/></g><rect x="394" y="129" width="8" height="10" fill="#000"/><rect x="395" y="130" width="6" height="8" fill="#fff"/><rect x="396" y="132" width="3" height="1" fill="#000"/><rect x="396" y="134" width="4" height="1" fill="#000"/><rect x="400" y="132" width="10" height="11" fill="#000080"/><rect x="401" y="133" width="8" height="9" fill="#fff"/><rect x="402" y="136" width="5" height="1" fill="#000"/><rect x="402" y="138" width="5" height="1" fill="#000"/><rect x="407" y="133" width="2" height="2" fill="#000080"/><rect x="418" y="130" width="14" height="12" fill="#000"/><rect x="419" y="131" width="12" height="10" fill="#909040"/><rect x="423" y="129" width="4" height="3" fill="#ffff00"/><rect x="422" y="131" width="6" height="1" fill="#000"/><rect x="424" y="135" width="10" height="8" fill="#000080"/><rect x="425" y="136" width="8" height="6" fill="#fff"/><rect x="426" y="138" width="5" height="1" fill="#000"/><rect x="426" y="140" width="5" height="1" fill="#000"/><g shape-rendering="auto"><path d="M452 134.5Q456 131.5 460 134Q462 136.5 460.5 139" stroke="#000080" stroke-width="1.6" fill="none"/><polygon points="449.5,133 449.5,138 454.5,138" fill="#000080"/><path d="M483 134.5Q479 131.5 475 134Q473 136.5 474.5 139" stroke="#000080" stroke-width="1.6" fill="none"/><polygon points="485.5,133 485.5,138 480.5,138" fill="#000080"/><text x="503.5" y="142.5" font-family="Liberation Sans" font-weight="bold" font-size="17" textLength="11" lengthAdjust="spacingAndGlyphs" fill="#ffff00" stroke="#000" stroke-width="1.2" paint-order="stroke">?</text></g><rect x="597" y="17" width="6" height="1" fill="#e8e8e8"/><rect x="602" y="16" width="1" height="2" fill="#e8e8e8"/><rect x="596" y="15" width="6" height="2" fill="#808080"/><rect x="611" y="8" width="9" height="9" fill="#000"/><rect x="612" y="10" width="7" height="6" fill="#c8c8c8"/><g shape-rendering="auto"><path d="M630.5 9.5L637.5 15.5M637.5 9.5L630.5 15.5" stroke="#000" stroke-width="1.8"/></g></svg>
</body></html>
